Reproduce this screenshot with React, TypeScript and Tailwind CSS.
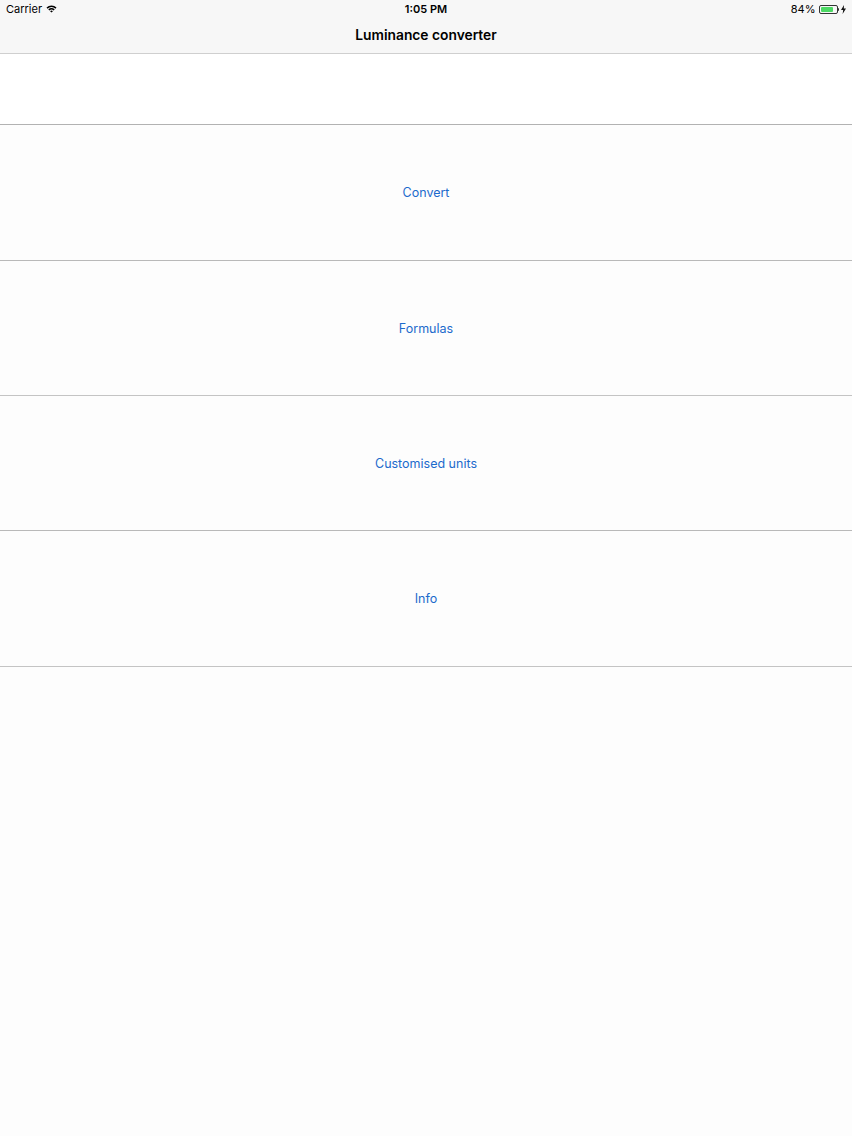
const rows = [
  { label: "Convert", h: "h-[136px]", line: "border-[#b9b9b9]" },
  { label: "Formulas", h: "h-[135px]", line: "border-[#c4c4c4]" },
  { label: "Customised units", h: "h-[135px]", line: "border-[#b9b9b9]" },
  { label: "Info", h: "h-[136px]", line: "border-[#c4c4c4]" },
];

function WifiIcon() {
  return (
    <svg width="11" height="8" viewBox="0 0 11 8" className="text-black">
      <path d="M0.5 2.6 A7 7 0 0 1 10.5 2.6 L9.4 3.7 A5.5 5.5 0 0 0 1.6 3.7 Z" fill="currentColor" />
      <path d="M2.3 4.4 A4.5 4.5 0 0 1 8.7 4.4 L7.6 5.5 A3 3 0 0 0 3.4 5.5 Z" fill="currentColor" />
      <path d="M4.1 6.2 A2 2 0 0 1 6.9 6.2 L5.5 7.6 Z" fill="currentColor" />
    </svg>
  );
}

function Battery() {
  return (
    <div className="flex items-center gap-[2px]">
      <div className="flex items-center">
        <div className="flex h-[9px] w-[19px] items-center rounded-[2px] border border-[#333] p-[1px]">
          <div className="h-full w-[84%] rounded-[1px] bg-[#4cd964]" />
        </div>
        <div className="h-[3px] w-[1.5px] rounded-r-[1px] bg-[#333]" />
      </div>
      <svg width="5" height="9" viewBox="0 0 5 9">
        <path d="M3 0 L0 5 L2.2 5 L1.6 9 L5 3.6 L2.8 3.6 Z" fill="#111" />
      </svg>
    </div>
  );
}

export default function App() {
  return (
    <div className="min-h-[1136px] bg-[#fdfdfd] font-['Inter','Liberation_Sans',sans-serif]">
      <header className="border-b border-[#cfcfcf] bg-[#f7f7f7]">
        <div className="relative flex h-[20px] items-center px-[6px] pb-[2px] text-[11px] text-black">
          <div className="flex items-center gap-[4px]">
            <span>Carrier</span>
            <WifiIcon />
          </div>
          <span className="absolute left-1/2 top-[2px] -translate-x-1/2 font-semibold leading-[14px]">1:05 PM</span>
          <div className="ml-auto flex items-center gap-[3px]">
            <span>84%</span>
            <Battery />
          </div>
        </div>
        <div className="flex h-[33px] items-center justify-center pb-[3px] text-[13.8px] font-semibold text-black">
          Luminance converter
        </div>
      </header>

      <main>
        <div className="h-[71px] border-b border-[#b2b2b2] bg-white" />
        {rows.map((r) => (
          <div
            key={r.label}
            className={`flex ${r.h} items-center justify-center border-b ${r.line} bg-[#fdfdfd] pt-[2px]`}
          >
            <span className="text-[12.5px] text-[#1c6acc]">{r.label}</span>
          </div>
        ))}
      </main>
    </div>
  );
}
